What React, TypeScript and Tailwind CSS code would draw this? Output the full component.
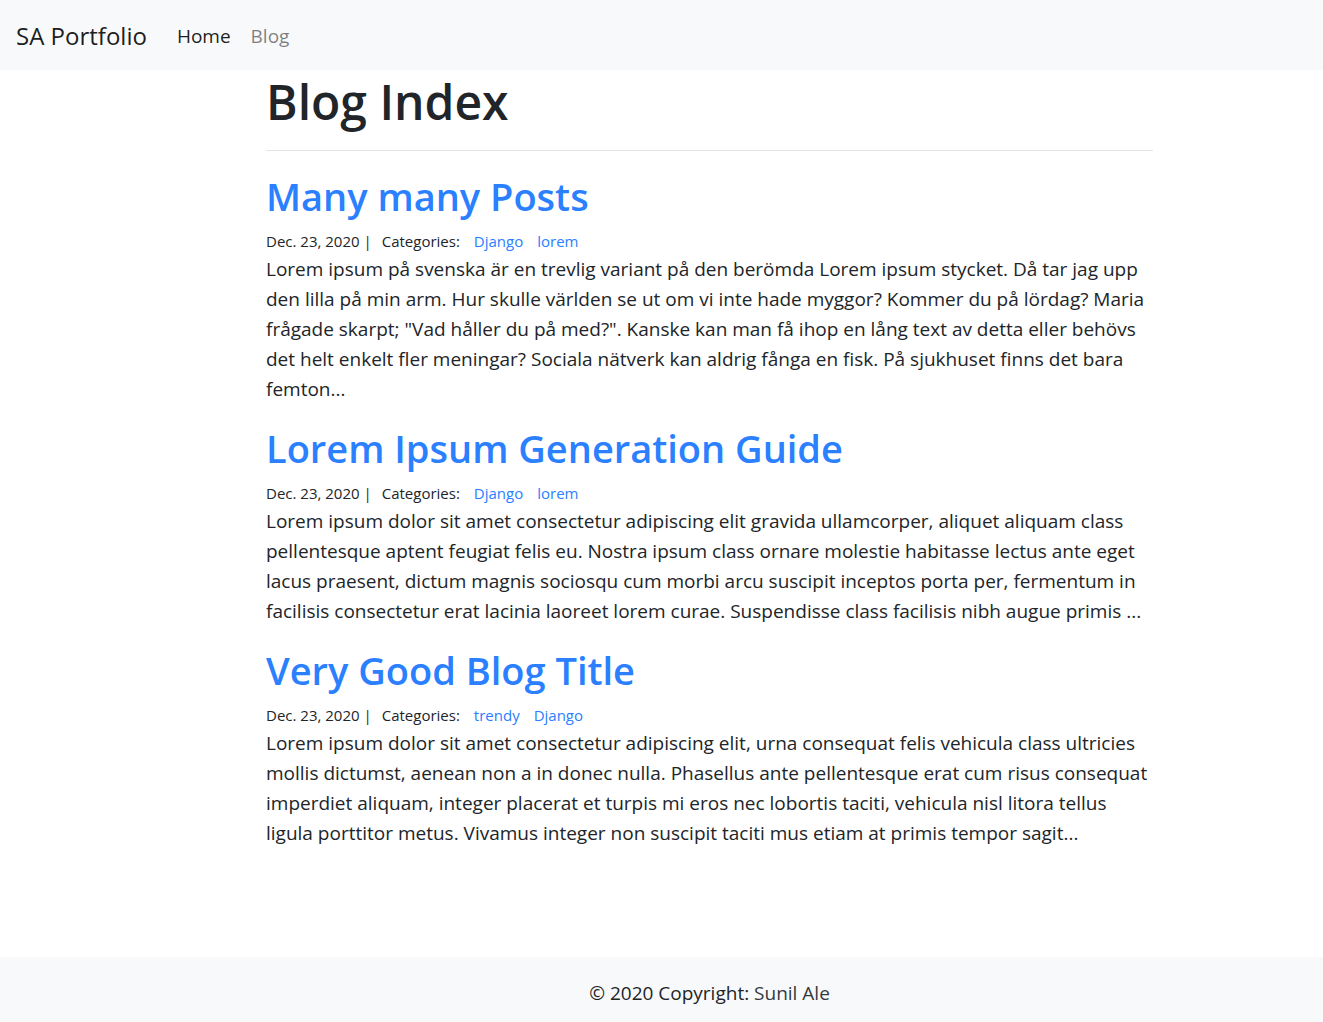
const posts = [
  {
    title: "Many many Posts",
    tags: ["Django", "lorem"],
    text: "Lorem ipsum på svenska är en trevlig variant på den berömda Lorem ipsum stycket. Då tar jag upp den lilla på min arm. Hur skulle världen se ut om vi inte hade myggor? Kommer du på lördag? Maria frågade skarpt; \"Vad håller du på med?\". Kanske kan man få ihop en lång text av detta eller behövs det helt enkelt fler meningar? Sociala nätverk kan aldrig fånga en fisk. På sjukhuset finns det bara femton...",
  },
  {
    title: "Lorem Ipsum Generation Guide",
    tags: ["Django", "lorem"],
    text: "Lorem ipsum dolor sit amet consectetur adipiscing elit gravida ullamcorper, aliquet aliquam class pellentesque aptent feugiat felis eu. Nostra ipsum class ornare molestie habitasse lectus ante eget lacus praesent, dictum magnis sociosqu cum morbi arcu suscipit inceptos porta per, fermentum in facilisis consectetur erat lacinia laoreet lorem curae. Suspendisse class facilisis nibh augue primis ...",
  },
  {
    title: "Very Good Blog Title",
    tags: ["trendy", "Django"],
    text: "Lorem ipsum dolor sit amet consectetur adipiscing elit, urna consequat felis vehicula class ultricies mollis dictumst, aenean non a in donec nulla. Phasellus ante pellentesque erat cum risus consequat imperdiet aliquam, integer placerat et turpis mi eros nec lobortis taciti, vehicula nisl litora tellus ligula porttitor metus. Vivamus integer non suscipit taciti mus etiam at primis tempor sagit...",
  },
];

export default function App() {
  return (
    <div className="flex min-h-screen flex-col bg-white font-['Open_Sans',sans-serif] text-[19px] leading-[30px] text-[#212529]">
      <nav className="flex items-center bg-[#f8f9fb] px-4 pt-[21px] pb-[19px]">
        <a href="#" className="mr-[30px] text-2xl leading-[30px] text-black/90">SA Portfolio</a>
        <a href="#" className="mr-5 text-black/90">Home</a>
        <a href="#" className="text-black/50">Blog</a>
      </nav>
      <main className="mr-[170px] ml-[266px] grow">
        <h1 className="pt-0.5 text-5xl leading-[60px] font-semibold">Blog Index</h1>
        <hr className="mt-[18px] mb-[19px] border-black/10" />
        {posts.map((post) => (
          <article key={post.title} className="mb-[18px]">
            <h2 className="mb-[9px] text-[38px] leading-[52px] font-semibold text-[#2a80ff]">
              <a href="#">{post.title}</a>
            </h2>
            <div className="mb-[3px] flex gap-3.5 text-[15px] leading-5">
              <span>Dec. 23, 2020 |</span>
              <span className="-ml-1">Categories:</span>
              {post.tags.map((tag) => (
                <a key={tag} href="#" className="text-[#2a80ff]">{tag}</a>
              ))}
            </div>
            <p>{post.text}</p>
          </article>
        ))}
      </main>
      <footer className="bg-[#f8f9fb] pt-[21px] pb-3.5 pl-[96px] text-center">
        © 2020 Copyright: <a href="#" className="text-[#343a40]">Sunil Ale</a>
      </footer>
    </div>
  );
}
